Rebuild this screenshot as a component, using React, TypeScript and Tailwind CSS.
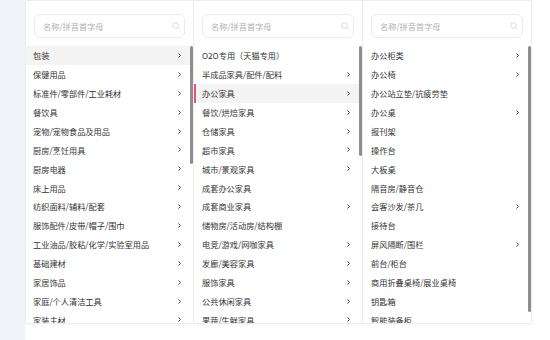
type Item = { name: string; sub?: boolean };

const col1: Item[] = [
  { name: "包装", sub: true },
  { name: "保健用品", sub: true },
  { name: "标准件/零部件/工业耗材", sub: true },
  { name: "餐饮具", sub: true },
  { name: "宠物/宠物食品及用品", sub: true },
  { name: "厨房/烹饪用具", sub: true },
  { name: "厨房电器", sub: true },
  { name: "床上用品", sub: true },
  { name: "纺织面料/辅料/配套", sub: true },
  { name: "服饰配件/皮带/帽子/围巾", sub: true },
  { name: "工业油品/胶粘/化学/实验室用品", sub: true },
  { name: "基础建材", sub: true },
  { name: "家居饰品", sub: true },
  { name: "家庭/个人清洁工具", sub: true },
  { name: "家装主材", sub: true },
];

const col2: Item[] = [
  { name: "O2O专用（天猫专用）" },
  { name: "半成品家具/配件/配料", sub: true },
  { name: "办公家具", sub: true },
  { name: "餐饮/烘焙家具", sub: true },
  { name: "仓储家具", sub: true },
  { name: "超市家具", sub: true },
  { name: "城市/景观家具", sub: true },
  { name: "成套办公家具" },
  { name: "成套商业家具", sub: true },
  { name: "储物房/活动房/结构棚" },
  { name: "电竞/游戏/网咖家具", sub: true },
  { name: "发廊/美容家具", sub: true },
  { name: "服饰家具", sub: true },
  { name: "公共休闲家具", sub: true },
  { name: "果蔬/生鲜家具", sub: true },
];

const col3: Item[] = [
  { name: "办公柜类", sub: true },
  { name: "办公椅", sub: true },
  { name: "办公站立垫/抗疲劳垫" },
  { name: "办公桌", sub: true },
  { name: "报刊架" },
  { name: "操作台" },
  { name: "大板桌" },
  { name: "隔音房/静音仓" },
  { name: "会客沙发/茶几", sub: true },
  { name: "接待台" },
  { name: "屏风隔断/围栏", sub: true },
  { name: "前台/柜台" },
  { name: "商用折叠桌椅/展业桌椅" },
  { name: "钥匙箱" },
  { name: "智能装备柜" },
];

const Chevron = () => (
  <svg width="3" height="5" viewBox="0 0 3 5" className="flex-none">
    <path d="M0.5 0.5 L2.5 2.5 L0.5 4.5" fill="none" stroke="#444" strokeWidth="1" />
  </svg>
);

const SearchIcon = () => (
  <svg width="8" height="8" viewBox="0 0 8 8" className="flex-none">
    <circle cx="3.5" cy="3.5" r="2.8" fill="none" stroke="#cfcfcf" strokeWidth="0.8" />
    <path d="M5.6 5.6 L7.5 7.5" stroke="#cfcfcf" strokeWidth="0.8" />
  </svg>
);

const Column = ({
  items,
  width,
  padLeft,
  active,
  marker,
  thumb,
}: {
  items: Item[];
  width: string;
  padLeft: string;
  active: number;
  marker?: boolean;
  thumb: string;
}) => {
  return (
    <div className={`${width} flex flex-none flex-col border-r border-[#ededed]`}>
      <div className="px-[8px] pb-[8px] pt-[13px]">
        <div className="flex h-[24px] items-center justify-between rounded-[6px] border border-[#ebebeb] pl-[8px] pr-[4px]">
          <span className="text-[8.2px] text-[#b0b0b0]">名称/拼音首字母</span>
          <SearchIcon />
        </div>
      </div>
      <div className="relative flex-1 overflow-hidden">
        {items.map((it, i) => (
          <div
            key={it.name}
            className={`relative flex h-[18.9px] items-center justify-between pr-[12px] ${padLeft} ${
              i === active ? "bg-[#f4f4f4]" : ""
            }`}
          >
            {i === active && marker && (
              <div className="absolute left-0 top-0 h-full w-[2px] bg-[#ef4f78]" />
            )}
            <span className="whitespace-nowrap text-[8.2px] text-[#333]">{it.name}</span>
            {it.sub && <Chevron />}
          </div>
        ))}
        <div className={`absolute right-0 top-0 w-[3px] rounded-full bg-[#8e8e8e] ${thumb}`} />
      </div>
    </div>
  );
};

export default function App() {
  return (
    <div className="flex h-[340px] w-[550px] overflow-hidden bg-white font-['Noto_Sans_CJK_SC','Noto_Sans',sans-serif]">
      <div className="w-[25px] flex-none bg-[#f3f4fa]" />
      <div className="flex-1">
        <div className="flex h-[324px] w-[507px] border-l border-t border-b border-[#ededed] shadow-[0_1px_2px_rgba(0,0,0,0.03)]">
          <Column items={col1} width="w-[168px]" padLeft="pl-[7px]" active={0} thumb="h-[118px]" />
          <Column items={col2} width="w-[169px]" padLeft="pl-[8px]" active={2} marker thumb="h-[110px]" />
          <Column items={col3} width="w-[169px]" padLeft="pl-[8px]" active={-1} thumb="h-[266px]" />
        </div>
      </div>
    </div>
  );
}
